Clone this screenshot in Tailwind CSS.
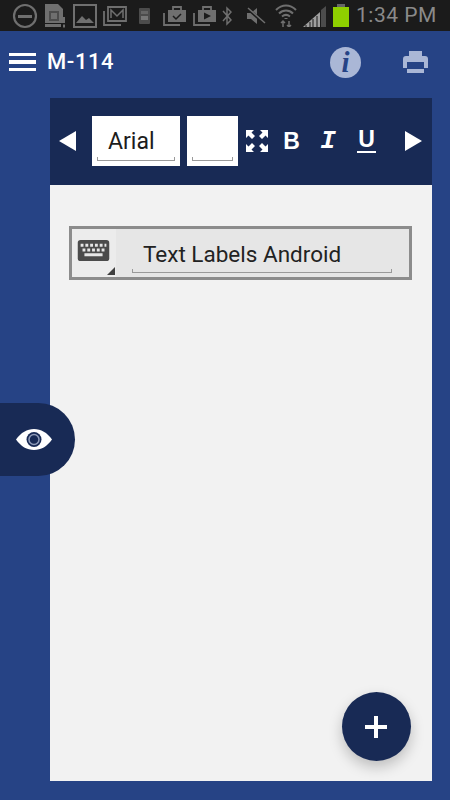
<!DOCTYPE html>
<html>
<head>
<meta charset="utf-8">
<script src="https://cdn.jsdelivr.net/npm/@tailwindcss/browser@4"></script>
</head>
<body class="m-0">
<div class="relative w-[450px] h-[800px] overflow-hidden bg-[#264385] font-['Roboto',sans-serif]">
  <!-- status bar -->
  <div class="relative flex items-center h-[31px] bg-[#1b1b1b] text-[#8f8f8f]">
    <svg class="ml-[12px] w-[26px] h-[26px] shrink-0" viewBox="0 0 26 26" fill="none" stroke="#6f6f6f" stroke-width="2.200"><circle cx="13" cy="13" r="11"/><path d="M6 13.500h14" stroke-width="3"/></svg>
    <svg class="ml-[6px] w-[22px] h-[26px] shrink-0" viewBox="0 0 22 26"><path d="M1 1h13l5 5v14H1z" fill="#6f6f6f"/><path d="M5 8h10v10H5zM7 10v6h6v-6z" fill="#4c4c4c" fill-rule="evenodd"/><path d="M19 14h2v6h-2zM19 21.500h2v3h-2zM1 21h16v3H1z" fill="#6f6f6f"/></svg>
    <svg class="ml-[7px] w-[24px] h-[24px] shrink-0" viewBox="0 0 24 24"><path d="M1 1h22v22H1z" fill="none" stroke="#6f6f6f" stroke-width="2"/><path d="M3 19l6-7 4 4 3-2 5 5z" fill="#6f6f6f"/></svg>
    <svg class="ml-[6px] w-[24px] h-[22px] shrink-0" viewBox="0 0 24 22" fill="none" stroke="#6f6f6f" stroke-width="1.800"><path d="M1 6v14h17"/><path d="M5 2h18v14H5z"/><path d="M8 13V5l6 6 6-6v8" stroke-width="1.500"/></svg>
    <svg class="ml-[12px] w-[11px] h-[16px] shrink-0" viewBox="0 0 11 16"><rect width="11" height="16" rx="1" fill="#4c4c4c"/><rect x="2" y="3" width="7" height="3" fill="#666"/><rect x="2" y="8" width="7" height="4" fill="#777"/></svg>
    <svg class="ml-[13px] w-[24px] h-[21px] shrink-0" viewBox="0 0 24 21"><path d="M1 8v12h16" fill="none" stroke="#6f6f6f" stroke-width="1.800"/><path d="M5 5h18v12H5z" fill="#6f6f6f"/><path d="M10 5V2h8v3" fill="none" stroke="#6f6f6f" stroke-width="1.800"/><path d="M10 11l3 3 5-5" fill="none" stroke="#1b1b1b" stroke-width="1.500"/></svg>
    <svg class="ml-[6px] w-[24px] h-[21px] shrink-0" viewBox="0 0 24 21"><path d="M1 8v12h16" fill="none" stroke="#6f6f6f" stroke-width="1.800"/><path d="M5 5h18v12H5z" fill="#6f6f6f"/><path d="M10 5V2h8v3" fill="none" stroke="#6f6f6f" stroke-width="1.800"/><path d="M11 7.500l7 3.500-7 3.500z" fill="#1b1b1b"/></svg>
    <svg class="ml-[5px] w-[10px] h-[20px] shrink-0" viewBox="0 0 10 20" fill="none" stroke="#6f6f6f" stroke-width="1.500"><path d="M1 5l8 9-4 4V2l4 4-8 9"/></svg>
    <svg class="ml-[14px] w-[20px] h-[20px] shrink-0" viewBox="0 0 20 20"><path d="M1 7h4l6-5v16l-6-5H1z" fill="#6f6f6f"/><path d="M1 2l18 16" stroke="#1b1b1b" stroke-width="3"/><path d="M2 2l17 15" stroke="#6f6f6f" stroke-width="1.500"/></svg>
    <svg class="ml-[9px] w-[22px] h-[23px] shrink-0" viewBox="0 0 22 23" fill="none" stroke="#6f6f6f" stroke-width="2"><path d="M1 6c6-6 14-6 20 0M4 9.500c4-4 10-4 14 0M7 12.500c2.500-2 5.500-2 8 0"/><path d="M11 14v1" stroke-width="3"/><path d="M8 23v-6M6 19l2-2 2 2M14 17v6M12 21l2 2 2-2" stroke-width="1.500"/></svg>
    <svg class="ml-[6px] w-[23px] h-[22px] shrink-0" viewBox="0 0 23 22"><path d="M0 22L17 7v15z" fill="#a0a0a0"/><path d="M18 5l5-4v21h-5z" fill="#4c4c4c"/><path d="M3 22v-2M7 22v-5M10 22v-8M14 22v-11" stroke="#1b1b1b" stroke-width="1"/></svg>
    <div class="ml-[7px] flex flex-col items-center w-[16px] shrink-0">
      <div class="w-[8px] h-[3px] bg-[#666]"></div>
      <div class="w-[16px] h-[20px] bg-[#8fcf00]"></div>
    </div>
    <span class="ml-[7px] text-[21px] leading-none text-[#8a8a8a] whitespace-nowrap tracking-[0.5px]">1:34 PM</span>
  </div>

  <!-- app bar -->
  <div class="flex items-center h-[67px] pl-[9px] pb-[5px] text-white">
    <div class="flex flex-col gap-[4px] w-[27px]">
      <div class="h-[3.500px] bg-white"></div>
      <div class="h-[3.500px] bg-white"></div>
      <div class="h-[3.500px] bg-white"></div>
    </div>
    <span class="ml-[11px] text-[22px] leading-none tracking-[0.6px] font-medium">M-114</span>
    <div class="flex-1"></div>
    <div class="flex items-center justify-center w-[31px] h-[31px] rounded-full bg-[#aab7d6] text-[#264385] text-[29px] font-bold italic font-['Liberation_Serif',serif] leading-none">i</div>
    <svg class="ml-[42px] mr-[22px] w-[25px] h-[22px]" viewBox="0 0 25 22"><path d="M6 0h13v5H6z" fill="#aab7d6"/><path d="M3 5h19a3 3 0 0 1 3 3v9h-4v-6H4v6H0V8a3 3 0 0 1 3-3z" fill="#aab7d6"/><path d="M4 18h17v4H4z" fill="#aab7d6"/><path d="M7 13h11v5H7z" fill="#264385"/></svg>
  </div>

  <!-- panel -->
  <div class="ml-[50px] mr-[18px] h-[683px] bg-[#f2f2f2] flex flex-col">
    <div class="flex items-center h-[87px] bg-[#182a55] shrink-0 pb-[1px]">
      <svg class="ml-[9px] w-[18px] h-[20px]" viewBox="0 0 18 20"><path d="M0 10L17 0v20z" fill="#fff"/></svg>
      <div class="relative ml-[15px] w-[88px] h-[50px] bg-white text-[#1c1c1c] text-[23px] leading-none">
        <span class="absolute left-[16px] top-[14px]">Arial</span>
        <div class="absolute left-[5px] right-[5px] bottom-[5px] h-[4px] border-b border-x border-[#9a9a9a]"></div>
      </div>
      <div class="relative ml-[7px] w-[51px] h-[50px] bg-white">
        <div class="absolute left-[5px] right-[5px] bottom-[5px] h-[4px] border-b border-x border-[#9a9a9a]"></div>
      </div>
      <svg class="ml-[8px] w-[22px] h-[22px]" viewBox="0 0 22 22" fill="#fff"><path d="M0 0h8L5.500 2.500 9 6 6 9 2.500 5.500 0 8zM22 0v8l-2.500-2.500L16 9l-3-3 3.500-3.500L14 0zM0 22v-8l2.500 2.500L6 13l3 3-3.500 3.500L8 22zM22 22h-8l2.500-2.500L13 16l3-3 3.500 3.500L22 14z"/></svg>
      <span class="ml-[15px] w-[17px] text-center text-[23px] leading-none font-bold text-white font-['Liberation_Sans',sans-serif]">B</span>
      <span class="ml-[19px] w-[18px] text-center text-[26px] leading-none font-bold italic text-white font-['Liberation_Mono',monospace]">I</span>
      <div class="ml-[20px] w-[19px] flex flex-col items-center">
        <span class="text-[23px] leading-[20px] font-bold text-white font-['Liberation_Sans',sans-serif]">U</span>
        <div class="mt-[2px] w-[19px] h-[2.500px] bg-white"></div>
      </div>
      <svg class="ml-[28px] w-[18px] h-[20px]" viewBox="0 0 18 20"><path d="M18 10L1 0v20z" fill="#fff"/></svg>
    </div>
    <div class="mt-[41px] ml-[19px] mr-[20px] h-[54px] border-[3px] border-[#8c8c8c] bg-[#e6e6e6] flex items-center">
      <div class="relative w-[44px] h-[48px] bg-[#ececec] flex items-center justify-center shrink-0">
        <svg class="w-[33px] h-[21px] ml-[-1px] mt-[-5px]" viewBox="0 0 33 22"><rect width="33" height="22" rx="3" fill="#4b4b4b"/><path d="M3 4h3v3H3zM8 4h3v3H8zM13 4h3v3h-3zM18 4h3v3h-3zM23 4h3v3h-3zM28 4h2v3h-2zM5 9h3v3H5zM10 9h3v3h-3zM15 9h3v3h-3zM20 9h3v3h-3zM25 9h3v3h-3zM7 14h19v3H7z" fill="#e6e6e6"/></svg>
        <svg class="absolute right-[1px] bottom-[2px] w-[8px] h-[8px]" viewBox="0 0 8 8"><path d="M8 0v8H0z" fill="#3f3f3f"/></svg>
      </div>
      <div class="relative flex-1 h-full ml-[16px] mr-[17px]">
        <span class="absolute left-[11px] top-[12px] text-[22.500px] leading-[26px] whitespace-nowrap text-[#222]">Text Labels Android</span>
        <div class="absolute left-0 right-0 bottom-[4px] h-[4px] border-b border-x border-[#9a9a9a]"></div>
      </div>
    </div>
  </div>

  <!-- eye tab -->
  <div class="absolute left-0 top-[403px] w-[75px] h-[73px] bg-[#182a55] rounded-r-[37px] flex items-center pl-[16px]">
    <svg class="w-[36px] h-[21px]" viewBox="0 0 36 21"><path d="M0 10.500C5 3.500 11 0 18 0s13 3.500 18 10.500C31 17.500 25 21 18 21S5 17.500 0 10.500z" fill="#fff"/><circle cx="18" cy="10.500" r="7.500" fill="#182a55"/><circle cx="18" cy="10.500" r="5" fill="none" stroke="#8f9bb8" stroke-width="1.500"/><circle cx="18" cy="10.500" r="3.300" fill="#182a55"/></svg>
  </div>

  <!-- FAB -->
  <div class="absolute left-[342px] top-[692px] w-[69px] h-[69px] rounded-full bg-[#182a55] flex items-center justify-center pr-[1px] shadow-[0_6px_14px_rgba(0,0,0,0.22)]">
    <svg class="w-[22px] h-[22px]" viewBox="0 0 22 22"><path d="M9 0h4v9h9v4h-9v9H9v-9H0V9h9z" fill="#fff"/></svg>
  </div>
</div>
</body>
</html>
